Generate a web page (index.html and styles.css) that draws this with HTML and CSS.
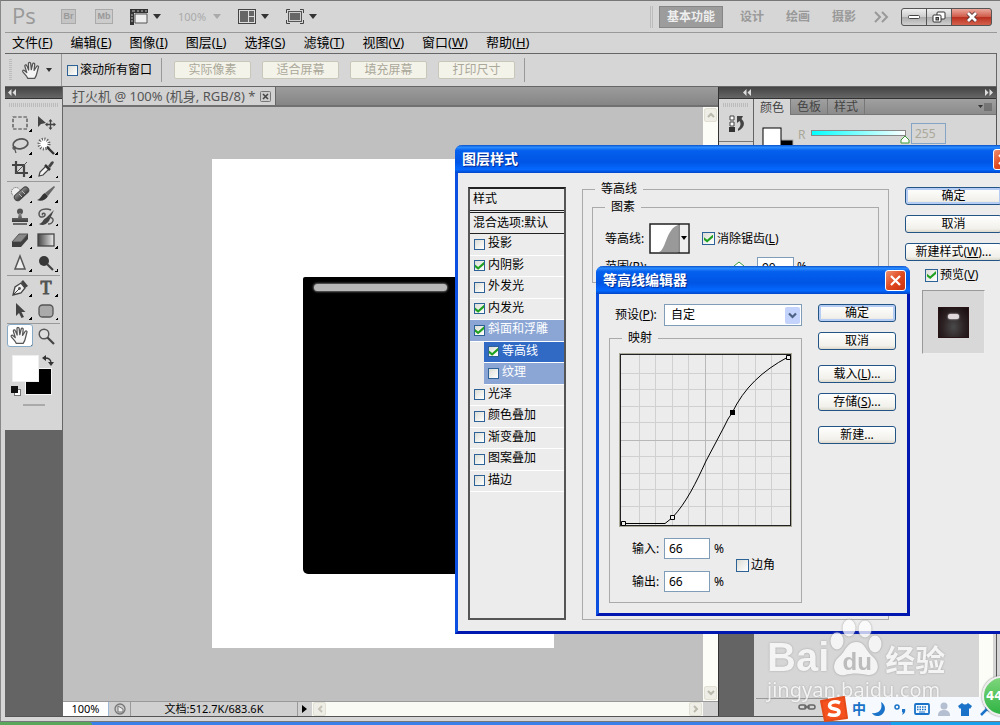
FILE: index.html
```html
<!DOCTYPE html>
<html lang="zh-CN">
<head>
<meta charset="utf-8">
<title>Photoshop</title>
<link rel="stylesheet" href="styles.css">
</head>
<body>
<svg class="defs" width="0" height="0" aria-hidden="true">
  <defs>
    <linearGradient id="steel" x1="0" y1="0" x2="0" y2="1"><stop offset="0" stop-color="#8c8c8c"/><stop offset="1" stop-color="#3c3c3c"/></linearGradient>
    <linearGradient id="fade" x1="0" y1="0" x2="1" y2="0"><stop offset="0" stop-color="#444"/><stop offset="1" stop-color="#eee"/></linearGradient>
    <symbol id="hand" viewBox="0 0 18 18"><path d="M6 16.500C5 14 3 12.500 1.300 10.200C.6 9 2 8.200 3 9.200L5 11L3.200 5C2.900 3.600 4.600 3.200 5.100 4.500L6.800 8.500L6.600 2.500C6.600 1 8.500 1 8.700 2.500L9.300 8.200L10.600 2.800C11 1.400 12.700 1.800 12.500 3.200L11.900 8.800L14.300 5.200C15.100 4 16.600 4.900 16 6.200C14.800 9 15 13 12.500 16.500Z" fill="#f4f4f4" stroke="#555" stroke-width="1.200" stroke-linejoin="round"/></symbol>
  </defs>
</svg>
<div class="window">
  <header class="appbar">
    <span class="logo">Ps</span>
    <span class="appicon">Br</span>
    <span class="appicon folder">Mb</span>
    <button class="tool-menu ruler" aria-label="查看额外内容">
      <svg width="18" height="16"><path d="M0 0H18V4H4V16H0Z" fill="#333"/><path d="M5 5H17V14H5Z" fill="#eee" stroke="#555"/><path d="M2 2H5M7 2H9M11 2H13M15 2H17M1 6H3M1 9H3M1 12H3" stroke="#bbb"/></svg>
      <i class="caret"></i>
    </button>
    <button class="tool-menu zoomlevel">100%<i class="caret"></i></button>
    <button class="tool-menu arrange" aria-label="排列文档">
      <svg width="18" height="15"><rect x=".5" y=".5" width="17" height="14" fill="#ddd" stroke="#444"/><path d="M2 2H10V13H2ZM11 2H16V7H11ZM11 8H16V13H11Z" fill="#666"/></svg>
      <i class="caret"></i>
    </button>
    <button class="tool-menu" aria-label="屏幕模式">
      <svg width="18" height="15"><path d="M.5 4V.5H4M14 .5H17.500V4M17.500 11V14.500H14M4 14.500H.5V11" fill="none" stroke="#444"/><rect x="2.500" y="2.500" width="13" height="10" fill="#ccc" stroke="#555"/><rect x="4" y="4" width="10" height="7" fill="#666"/></svg>
      <i class="caret"></i>
    </button>
    <nav class="workspaces">
      <button class="workspace active">基本功能</button>
      <button class="workspace">设计</button>
      <button class="workspace">绘画</button>
      <button class="workspace">摄影</button>
      <button class="workspace more" aria-label="更多"><svg width="15" height="12"><path d="M1 1L6 6L1 11M8 1L13 6L8 11" fill="none" stroke="#999" stroke-width="2"/></svg></button>
    </nav>
    <div class="winbuttons">
      <button aria-label="最小化"><svg width="14" height="6"><rect x="1.500" y="1.500" width="11" height="3" rx="1" fill="#fff" stroke="#444"/></svg></button>
      <button aria-label="还原"><svg width="14" height="12"><rect x="5" y="1" width="8" height="7" rx="1" fill="#fff" stroke="#333"/><rect x="1" y="4" width="8" height="7" rx="1" fill="#fff" stroke="#333"/><rect x="4" y="6.500" width="2.500" height="2.500" fill="#888" stroke="#333"/></svg></button>
      <button class="close" aria-label="关闭"><svg width="14" height="12"><path d="M3 2L11 10M11 2L3 10" stroke="#553030" stroke-width="4.500"/><path d="M3 2L11 10M11 2L3 10" stroke="#fff" stroke-width="2.800"/></svg></button>
    </div>
  </header>

  <nav class="menubar">
    <button>文件(<u>F</u>)</button><button>编辑(<u>E</u>)</button><button>图像(<u>I</u>)</button><button>图层(<u>L</u>)</button><button>选择(<u>S</u>)</button><button>滤镜(<u>T</u>)</button><button>视图(<u>V</u>)</button><button>窗口(<u>W</u>)</button><button>帮助(<u>H</u>)</button>
  </nav>

  <div class="options">
    <span class="grip-v"></span>
    <button class="current-tool" aria-label="抓手工具"><svg width="20" height="19"><use href="#hand"/></svg><i class="caret small"></i></button>
    <div class="scroll-all"><label class="check"><input type="checkbox">滚动所有窗口</label></div>
    <div class="option-buttons">
      <button disabled>实际像素</button><button disabled>适合屏幕</button><button disabled>填充屏幕</button><button disabled>打印尺寸</button>
    </div>
  </div>

  <main class="main">
    <aside class="toolbar">
      <div class="dockhead"><svg width="8" height="7"><path d="M3.500 0V7L0 3.500ZM8 0V7L4.500 3.500Z" fill="#ddd"/></svg></div>
      <div class="tools">
        <span class="grip-h"></span>
        <div class="toolgroup">
          <button class="tool" aria-label="选框"><svg viewBox="0 0 20 20"><rect x="3" y="4" width="14" height="12" fill="none" stroke="#444" stroke-width="1.200" stroke-dasharray="3.500 1.700"/></svg></button>
          <button class="tool flat" aria-label="移动"><svg viewBox="0 0 20 20"><path d="M2 3V14L5 11L10 10Z" fill="#444"/><path d="M14.500 7V16M10 11.500H19" stroke="#444" stroke-width="1.300"/><path d="M14.500 6L12.500 8.500H16.500ZM14.500 17L12.500 14.500H16.500ZM9 11.500L11.500 9.500V13.500ZM20 11.500L17.500 9.500V13.500Z" fill="#444"/></svg></button>
          <button class="tool" aria-label="套索"><svg viewBox="0 0 20 20"><ellipse cx="10.500" cy="8" rx="7.500" ry="4.800" transform="rotate(-12 10 8)" fill="none" stroke="#555" stroke-width="1.700"/><path d="M4 11C2 11 3 14 5 13C7 12 5 10 4 11L6 17" fill="none" stroke="#555" stroke-width="1.200"/></svg></button>
          <button class="tool" aria-label="魔棒"><svg viewBox="0 0 20 20"><circle cx="8" cy="8" r="5" fill="#f8f8f8" stroke="#555" stroke-width="3" stroke-dasharray="1 1.600"/><circle cx="8" cy="8" r="3" fill="#fff"/><path d="M11 11L18 18" stroke="#333" stroke-width="2.400"/></svg></button>
          <button class="tool" aria-label="裁剪"><svg viewBox="0 0 20 20"><path d="M6 2V14H18M2 6H14V18" fill="none" stroke="#444" stroke-width="2.200"/><path d="M6 14L17 3" stroke="#555"/></svg></button>
          <button class="tool" aria-label="吸管"><svg viewBox="0 0 20 20"><path d="M3 17L4 13L10 7L13 10L7 16Z" fill="#f4f4f4" stroke="#444" stroke-width="1.200"/><path d="M9 6L14 11" stroke="#333" stroke-width="2.500"/><path d="M12 7L15 3C17 1 19 3 17 5L14 9Z" fill="#444"/></svg></button>
        </div>
        <div class="toolgroup">
          <button class="tool" aria-label="修复画笔"><svg viewBox="0 0 20 20"><circle cx="6" cy="8" r="4.500" fill="#eee" stroke="#555" stroke-dasharray="1 1"/><rect x="3" y="7" width="17" height="6.500" rx="3.200" transform="rotate(-42 11 10)" fill="url(#steel)" stroke="#444"/><path d="M9 10L12 13M12 7L15 10" stroke="#bbb"/></svg></button>
          <button class="tool" aria-label="画笔"><svg viewBox="0 0 20 20"><path d="M1 16C5 15 5 11 9 9L12 12C10 16 5 18 1 16Z" fill="#333"/><path d="M9 9L18 2L19 3L12 12Z" fill="#666"/></svg></button>
          <button class="tool" aria-label="图章"><svg viewBox="0 0 20 20"><circle cx="10" cy="4.500" r="3" fill="#555"/><path d="M9 6H11L12 11H18V15H2V11H8Z" fill="url(#steel)"/><path d="M3 17H17" stroke="#444" stroke-width="1.500"/></svg></button>
          <button class="tool" aria-label="历史画笔"><svg viewBox="0 0 20 20"><path d="M15 3C10 1 3 2 3 7C3 12 10 10 9 7C8 5 5 7 7 8" fill="none" stroke="#555" stroke-width="1.500"/><path d="M3 17C7 16 7 12 10 11L18 3L13 14C10 18 6 19 3 17Z" fill="#444"/><path d="M13 10C20 11 17 17 12 17" fill="none" stroke="#555" stroke-width="1.400"/></svg></button>
          <button class="tool" aria-label="橡皮擦"><svg viewBox="0 0 20 20"><path d="M2 12L9 4H18L11 12Z" fill="#888" stroke="#555"/><path d="M2 12H11V17H2ZM11 12L18 4V9L11 17Z" fill="#3f3f3f"/></svg></button>
          <button class="tool" aria-label="渐变"><svg viewBox="0 0 20 20"><rect x="2" y="4" width="16" height="12" fill="url(#fade)" stroke="#444" stroke-width="1.300"/></svg></button>
          <button class="tool" aria-label="锐化"><svg viewBox="0 0 20 20"><path d="M10 3L15 16H5Z" fill="#eee" stroke="#555" stroke-width="1.500"/></svg></button>
          <button class="tool" aria-label="减淡"><svg viewBox="0 0 20 20"><circle cx="8" cy="8" r="5" fill="#383838"/><path d="M11 11L17 17" stroke="#444" stroke-width="2.200"/></svg></button>
        </div>
        <div class="toolgroup">
          <button class="tool" aria-label="钢笔"><svg viewBox="0 0 20 20"><path d="M3 17L5 9L11 5L15 10L11 15Z" fill="#f2f2f2" stroke="#444" stroke-width="1.300"/><path d="M3 17L9 11" stroke="#444"/><circle cx="9.500" cy="10.500" r="1.400" fill="#555"/><path d="M11 4L13 2L18 8L15 10Z" fill="#444"/></svg></button>
          <button class="tool type" aria-label="文字">T</button>
          <button class="tool" aria-label="路径选择"><svg viewBox="0 0 20 20"><path d="M6 2V15L9 12L11.500 17L14 16L11.500 11H15.500Z" fill="#444"/></svg></button>
          <button class="tool" aria-label="圆角矩形"><svg viewBox="0 0 20 20"><rect x="3" y="4" width="14" height="12" rx="3.500" fill="#aaa" stroke="#555" stroke-width="1.300"/></svg></button>
        </div>
        <div class="toolgroup last">
          <button class="tool selected" aria-label="抓手"><svg viewBox="0 0 20 20"><use href="#hand" width="19" height="19"/></svg></button>
          <button class="tool flat" aria-label="缩放"><svg viewBox="0 0 20 20"><circle cx="8" cy="8" r="4.800" fill="#ddd" stroke="#555" stroke-width="1.400"/><path d="M11.500 11.500L18 18" stroke="#444" stroke-width="2.200"/></svg></button>
        </div>
        <svg class="swatches" width="44" height="46" aria-label="前景色和背景色">
          <rect x="14.500" y="14.500" width="26" height="26" fill="#000" stroke="#f4f4f4"/>
          <rect x="1.500" y="1.500" width="26" height="26" fill="#fff" stroke="#eee"/>
          <path d="M34 4C38 4 40 6 40 9" fill="none" stroke="#333" stroke-width="1.300"/><path d="M35 1V7L31 4ZM37 8H43L40 12Z" fill="#333"/>
          <rect x="3.500" y="35.500" width="6" height="6" fill="#fff" stroke="#777"/><rect x="0" y="32" width="7" height="7" fill="#111"/>
        </svg>
        <span class="toolbar-end"></span>
      </div>
    </aside>

    <section class="document">
      <div class="tabs">
        <div class="tab">打火机 @ 100% (机身, RGB/8) *<button class="tab-close" aria-label="关闭标签"><svg width="11" height="11"><rect x=".5" y=".5" width="10" height="10" rx="1" fill="#ccc" stroke="#777"/><path d="M3 3L8 8M8 3L3 8" stroke="#444" stroke-width="1.500"/></svg></button></div>
      </div>
      <div class="viewport">
        <div class="canvas"><div class="paper"><div class="body-shape"><div class="shine"></div></div></div></div>
        <div class="vscroll">
          <button aria-label="向上"><svg width="8" height="6"><path d="M1 5L4 2L7 5" fill="none" stroke="#bbb9ac" stroke-width="2"/></svg></button>
          <button aria-label="向下"><svg width="8" height="6"><path d="M1 1L4 4L7 1" fill="none" stroke="#bbb9ac" stroke-width="2"/></svg></button>
        </div>
      </div>
      <div class="status">
        <input class="zoom" type="text" value="100%" aria-label="缩放比例">
        <span class="status-icon"><svg width="12" height="12"><circle cx="6" cy="6" r="5" fill="#ccc" stroke="#777" stroke-width="1.300"/><path d="M4 9V3L9 6V9Z" fill="#eee" stroke="#777"/></svg></span>
        <span class="docsize">文档:512.7K/683.6K</span>
        <button class="docmenu" aria-label="状态选项"><svg width="6" height="8"><path d="M0 0L5 4L0 8Z"/></svg></button>
        <div class="hscroll">
          <button aria-label="向左"><svg width="6" height="8"><path d="M5 1L2 4L5 7" fill="none" stroke="#c6c4b8" stroke-width="2"/></svg></button>
          <button aria-label="向右"><svg width="6" height="8"><path d="M1 1L4 4L1 7" fill="none" stroke="#bbb9ac" stroke-width="2"/></svg></button>
        </div>
        <span class="corner"></span>
      </div>
    </section>

    <aside class="dock">
      <div class="dockhead split">
        <svg width="8" height="7"><path d="M3.500 0V7L0 3.500ZM8 0V7L4.500 3.500Z" fill="#ddd"/></svg>
        <svg width="8" height="7"><path d="M0 0V7L3.500 3.500ZM4.500 0V7L8 3.500Z" fill="#ddd"/></svg>
      </div>
      <div class="dockbody">
        <div class="iconcol">
          <div class="iconpanel"><span class="grip-h"></span>
            <svg width="16" height="18"><path d="M1 1H5V5H1ZM1 7H5V11H1Z" fill="#fff" stroke="#444"/><rect y="12" x="0" width="6" height="5" fill="#333"/><path d="M8 1H14L12.500 4C17 8 15 13 9 16V14C12 11 12 8 10.500 6L8 8Z" fill="#444"/></svg>
          </div>
          <div class="iconpanel"></div>
        </div>
        <div class="panels">
          <div class="paneltabs"><button class="on">颜色</button><button>色板</button><button>样式</button>
            <svg class="panelmenu" width="14" height="8"><path d="M0 2H5L2.500 5Z" fill="#333"/><path d="M6 1H14M6 3H14M6 5H14M6 7H14" stroke="#555"/></svg></div>
          <div class="colorpanel">
            <svg width="32" height="26"><rect x="17" y="13" width="14" height="13" fill="#000" stroke="#aaa"/><rect x="1" y="1" width="18" height="24" fill="#fff" stroke="#000"/></svg>
            <label for="red">R</label>
            <svg class="redtrack" width="100" height="20"><defs><linearGradient id="cyan"><stop stop-color="#00ffff"/><stop offset="1" stop-color="#fff"/></linearGradient></defs><rect x=".5" y="5.500" width="94" height="5" fill="url(#cyan)" stroke="#888"/><path d="M94 11L98 15V18H90V15Z" fill="#fff" stroke="#3a9a3a"/></svg>
            <input id="red" type="text" value="255" disabled>
          </div>
          <div class="layers"><div class="layerlist"><span class="layerscroll"></span></div>
            <div class="layerfoot"><svg width="18" height="8"><rect x="1" y="2" width="7" height="4" rx="2" fill="none" stroke="#666" stroke-width="1.500"/><rect x="10" y="2" width="7" height="4" rx="2" fill="none" stroke="#666" stroke-width="1.500"/><path d="M6 4H12" stroke="#666" stroke-width="1.500"/></svg></div></div>
        </div>
      </div>
    </aside>
  </main>
</div>
<footer class="taskbar"><span class="start"></span><span class="tasks"></span><span class="tray"></span></footer>

<section class="dialog style-dialog" aria-label="图层样式">
  <div class="titlebar"><h2>图层样式</h2><button class="xclose" aria-label="关闭"><svg width="19" height="19"><path d="M5 5L14 14M14 5L5 14" stroke="#fff" stroke-width="2.200"/></svg></button></div>
  <div class="style-body">
    <div class="stylelist">
      <div class="sl-head">样式</div>
      <div class="sl-blend">混合选项:默认</div>
      <div class="sl-rows">
        <label class="check"><input type="checkbox">投影</label>
        <label class="check"><input type="checkbox" checked>内阴影</label>
        <label class="check"><input type="checkbox">外发光</label>
        <label class="check"><input type="checkbox" checked>内发光</label>
        <label class="check tinted"><input type="checkbox" checked>斜面和浮雕</label>
        <label class="check sub current"><input type="checkbox" checked>等高线</label>
        <label class="check sub tinted"><input type="checkbox">纹理</label>
        <label class="check"><input type="checkbox">光泽</label>
        <label class="check"><input type="checkbox">颜色叠加</label>
        <label class="check"><input type="checkbox">渐变叠加</label>
        <label class="check"><input type="checkbox">图案叠加</label>
        <label class="check"><input type="checkbox">描边</label>
      </div>
    </div>
    <fieldset class="contour">
      <legend>等高线</legend>
      <fieldset class="elements">
        <legend>图素</legend>
        <div class="row">
          <span>等高线:</span>
          <button class="contour-pick" aria-label="等高线"><svg width="41" height="31"><rect x="1" y="1" width="39" height="29" fill="#fff" stroke="#222" stroke-width="1.500"/><path d="M10 29C17 27 17 6 29 2V29Z" fill="#999"/><rect x="30" y="2" width="9" height="27" fill="#eee"/><path d="M30 1V30" stroke="#222"/><path d="M32 13H38L35 17Z"/></svg></button>
          <label class="check antialias"><input type="checkbox" checked><span>消除锯齿(<u>L</u>)</span></label>
        </div>
        <div class="row range">
          <label for="range">范围(<u>R</u>):</label>
          <svg width="98" height="14"><path d="M2 6.500H92" stroke="#999"/><path d="M84 2L89 6V13H79V6Z" fill="#fff" stroke="#3a9a3a"/></svg>
          <input id="range" type="text" value="90"><span>%</span>
        </div>
      </fieldset>
    </fieldset>
    <div class="style-actions">
      <button class="xp primary">确定</button>
      <button class="xp">取消</button>
      <button class="xp">新建样式(<u>W</u>)...</button>
      <label class="check"><input type="checkbox" checked><span>预览(<u>V</u>)</span></label>
      <div class="preview"><div class="preview-chip"></div></div>
    </div>
  </div>
</section>

<section class="dialog editor-dialog" aria-label="等高线编辑器">
  <div class="titlebar"><h2>等高线编辑器</h2><button class="xclose" aria-label="关闭"><svg width="19" height="19"><path d="M5 5L14 14M14 5L5 14" stroke="#fff" stroke-width="2.200"/></svg></button></div>
  <div class="editor-body">
    <div class="editor-left">
      <div class="preset">
        <label for="preset">预设(<u>P</u>):</label>
        <div class="combo"><select id="preset"><option>自定</option></select><svg width="15" height="17" viewBox="0 0 15 17"><rect width="15" height="17" rx="2" fill="#c3d3fb"/><path d="M4 6.500L7.500 10L11 6.500" fill="none" stroke="#4d6185" stroke-width="2.200"/></svg></div>
      </div>
      <fieldset class="mapping">
        <legend>映射</legend>
        <svg class="graph" width="173" height="174" aria-label="等高线曲线">
          <rect x=".5" y=".5" width="172" height="173" fill="#ececec" stroke="#aaa99a"/>
          <path d="M20.500 2V172M36.500 2V172M53.500 2V172M69.500 2V172M103.500 2V172M119.500 2V172M136.500 2V172M152.500 2V172M2 20.500H171M2 36.500H171M2 53.500H171M2 69.500H171M2 103.500H171M2 120.500H171M2 136.500H171M2 153.500H171" stroke="#d0d0d0"/>
          <path d="M86.500 2V172M2 87.500H171" stroke="#b8b8b8"/>
          <rect x="1.500" y="1.500" width="170" height="171" fill="none" stroke="#222"/>
          <path d="M4 170.500H46L53.500 164.500C67 150 77 130 87 108L105 74Q109 65 113 60C125 35 143 18 169 4" fill="none" stroke="#000"/>
          <path d="M2.500 168.500H6.500V172.500H2.500ZM51.500 162.500H55.500V166.500H51.500ZM167.500 2.500H171.500V6.500H167.500Z" fill="#eee" stroke="#000"/>
          <rect x="111" y="57" width="5" height="5"/>
        </svg>
        <div class="io">
          <div class="io-fields">
            <div class="io-row"><label for="in">输入:</label><input id="in" type="text" value="66"><span>%</span></div>
            <div class="io-row"><label for="out">输出:</label><input id="out" type="text" value="66"><span>%</span></div>
          </div>
          <label class="check"><input type="checkbox">边角</label>
        </div>
      </fieldset>
    </div>
    <div class="editor-actions">
      <div class="stack"><button class="xp primary">确定</button><button class="xp">取消</button></div>
      <div class="stack"><button class="xp">载入(<u>L</u>)...</button><button class="xp">存储(<u>S</u>)...</button></div>
      <div class="stack"><button class="xp">新建...</button></div>
    </div>
  </div>
</section>

<div class="watermark">
  <div class="wm-row"><span class="wm-bai">Bai</span>
    <span class="wm-paw"><svg width="56" height="58" viewBox="0 0 56 58"><ellipse cx="8" cy="22" rx="6.500" ry="8.500"/><ellipse cx="20" cy="9" rx="6.500" ry="8.500"/><ellipse cx="36" cy="10" rx="6.500" ry="8.500"/><ellipse cx="46" cy="25" rx="6.500" ry="8.500"/><path d="M27 23C36 23 36 31 43 37C53 45 49 57 39 56C31 54 23 54 16 56C5 58 1 46 10 38C17 32 18 23 27 23Z"/></svg><b>du</b></span>
    <span class="wm-jy">经验</span></div>
  <div class="wm-url">jingyan.baidu.com</div>
</div>

<div class="ime">
  <svg width="28" height="26" viewBox="0 0 28 26"><path d="M1 5L24 1L27 22L5 25Z" fill="#f4511e" stroke="#e64a19" stroke-linejoin="round" stroke-width="2"/><path d="M20 7C14 4 8 7 10 11C12 14 19 12 19 16C19 20 12 20 8 18" fill="none" stroke="#fff" stroke-width="3.500"/></svg>
  <span>中</span>
  <svg width="14" height="14"><path d="M9 0C16 4 13 14 5 14C3 14 1 13 0 11C7 12 11 7 9 0Z" fill="#1a73c8"/></svg>
  <svg width="12" height="12"><circle cx="3" cy="4" r="2" fill="none" stroke="#1a73c8" stroke-width="1.500"/><path d="M8 6H11C12 9 10 11 8 12C9 10 9 9 8 9Z" fill="#1a73c8"/></svg>
  <svg width="16" height="12"><rect x="1" y="1" width="14" height="10" rx="1" fill="none" stroke="#1a73c8" stroke-width="1.800"/><path d="M3 4H13M3 6.500H13" stroke="#1a73c8" stroke-width="1.500" stroke-dasharray="1.500 1"/><path d="M5 9H11" stroke="#1a73c8"/></svg>
  <svg width="12" height="14"><circle cx="6" cy="4" r="3.500" fill="#b4bfd2"/><path d="M0 14C-1 6 13 6 12 14Z" fill="#b4bfd2"/></svg>
  <svg width="14" height="14"><path d="M4 1C6 3 8 3 10 1L14 4L12 7L11 6V14H3V6L2 7L0 4Z" fill="#1a73c8"/></svg>
  <svg width="12" height="14"><path d="M1 13L8 6M7 3A3 3 0 1 0 12 7" stroke="#1a73c8" stroke-width="2.500" fill="none"/></svg>
</div>
<div class="ball">44</div>
</body>
</html>
```

FILE: styles.css
```css
* { box-sizing: border-box; }
html, body { height: 100%; }
body {
  margin: 0;
  position: relative;
  display: flex;
  flex-direction: column;
  overflow: hidden;
  background: #d6d6d6;
  color: #000;
  font: 12px/16px "Noto Sans", "Noto Sans CJK SC", sans-serif;
}
button, input, select { font: inherit; color: inherit; }
button { margin: 0; padding: 0; border: 0; background: none; }
svg { display: block; flex: none; }
.defs { position: absolute; }

.window {
  flex: 1;
  min-height: 0;
  display: flex;
  flex-direction: column;
  padding: 0 3px 4px 4px;
  border-top: 1px solid #777;
  border-left: 1px solid #888;
  background: #d6d6d6;
}

/* Application bar */
.appbar {
  display: flex;
  align-items: center;
  height: 32px;
  flex: none;
  padding: 0 5px 0 7px;
  border-bottom: 1px solid #999;
}
.logo { width: 49px; padding-bottom: 4px; font: 22px/24px "Open Sans", sans-serif; color: #999; }
.appicon {
  width: 15px;
  height: 15px;
  margin-right: 19px;
  border: 1px solid #aaa;
  background: #c4c4c4;
  color: #999;
  font: bold 9px/13px "Liberation Sans", sans-serif;
  text-align: center;
}
.appicon.folder { width: 18px; margin-right: 17px; background: #ccc; }
.tool-menu { display: flex; align-items: center; gap: 5px; margin-right: 17px; }
.tool-menu.zoomlevel { gap: 7px; color: #aaa; font-size: 11px; }
.caret { border: 4px solid transparent; border-top: 5px solid #333; border-bottom: 0; }
.zoomlevel .caret { border-top-color: #aaa; }
.caret.small { border-width: 4px 3px 0; }
.workspaces {
  display: flex;
  align-items: center;
  gap: 22px;
  margin-left: auto;
  padding-left: 6px;
  border-left: 3px double #bbb;
}
.workspace { color: #999; font-weight: bold; height: 22px; font-size: 12px; }
.workspace.active { width: 64px; margin-right: -5px; border: 1px solid #858585; background: #9c9c9c; color: #eee; }
.workspace.more { margin-left: -4px; }
.winbuttons { display: flex; margin-left: 12px; border: 1px solid #555; border-radius: 3px; background: #555; gap: 1px; overflow: hidden; }
.winbuttons button {
  display: grid;
  place-items: center;
  width: 24px;
  height: 16px;
  background: linear-gradient(#eee, #ccc 50%, #aaa 50%, #d0d0d0);
}
.winbuttons .close { width: 39px; background: linear-gradient(#eba89c, #cf5a48 50%, #b92e1e 50%, #d4604c); }

.menubar { display: flex; gap: 18px; height: 21px; flex: none; padding-left: 7px; border-bottom: 1px solid #666; }
.menubar button { font-size: 13px; line-height: 16px; padding-bottom: 2px; }
u { text-underline-offset: 1px; }

/* Options bar */
.options {
  display: flex;
  align-items: center;
  height: 32px;
  flex: none;
  padding-left: 4px;
  border-right: 1px solid #666;
}
.grip-v { width: 3px; height: 22px; background: repeating-linear-gradient(#bbb 0 1px, #d6d6d6 1px 2px); }
.current-tool { display: flex; align-items: center; gap: 5px; width: 50px; padding-left: 9px; height: 32px; border-right: 1px solid #999; }
.check { display: flex; align-items: center; gap: 2px; white-space: nowrap; }
.check input {
  appearance: none;
  flex: none;
  display: grid;
  place-items: center;
  width: 13px;
  height: 13px;
  margin: 0;
  border: 1px solid #2c6295;
  background: linear-gradient(135deg, #ddddd6, #fff);
}
.check input:checked::before {
  content: "";
  width: 9px;
  height: 8px;
  background: #21a121;
  clip-path: polygon(0 35%, 35% 65%, 100% 0, 100% 38%, 35% 100%, 0 70%);
}
.scroll-all { width: 100px; padding-left: 5px; height: 24px; display: flex; align-items: center; border-right: 1px solid #999; }
.scroll-all input { width: 11px; height: 11px; }
.option-buttons { display: flex; align-items: center; gap: 11px; height: 24px; padding: 0 9px 0 12px; border-right: 1px solid #999; }
.option-buttons button { width: 77px; height: 18px; border: 1px solid #c9c7ba; border-radius: 2px; background: #f4f3ea; color: #aaa899; line-height: 16px; }

.main { display: flex; flex: 1; min-height: 0; border-top: 1px solid #666; border-right: 1px solid #555; border-bottom: 1px solid #555; background: #646464; }
.dockhead { display: flex; align-items: center; height: 12px; padding-left: 3px; background: linear-gradient(#444, #666); border-bottom: 1px solid #333; flex: none; }
.dockhead.split { justify-content: space-between; padding: 0 3px 0 24px; }
.grip-h { display: block; height: 4px; background: repeating-linear-gradient(90deg, #bbb 0 1px, #d6d6d6 1px 2px); }

/* Tools */
.toolbar { width: 58px; flex: none; border-right: 1px solid #666; }
.tools { background: #d6d6d6; padding: 4px 2px 24px; }
.tools > .grip-h { margin: 0 2px 4px; }
.toolgroup { display: grid; grid-template-columns: 26px 26px; grid-auto-rows: 23px; border-bottom: 1px solid #999; padding-bottom: 1px; }
.toolgroup.last { border: 0; }
.tool { display: grid; place-items: center; border-radius: 3px; background: linear-gradient(135deg, transparent 50%, #000 50%) 22px 18px / 3px 3px no-repeat; }
.tool.flat { background: none; }
.tool svg { width: 20px; height: 20px; }
.tool.selected { border: 1px solid #86aac6; background-color: #fff; }
.tool.type { font: 18px/22px "Liberation Serif", serif; color: #444; -webkit-text-stroke: 1px #555; }
.swatches { margin: 6px 0 0 4px; }
.toolbar-end { display: block; width: 22px; height: 2px; margin: 4px auto 0; background: #aaa; }

/* Document */
.document { display: flex; flex-direction: column; flex: 1; min-width: 0; }
.tabs { display: flex; height: 20px; flex: none; background: linear-gradient(#9c9c9c, #858585); border-bottom: 2px solid #707070; }
.tab { display: flex; align-items: center; gap: 5px; padding: 0 4px 0 9px; background: #d2d2d2; color: #555; font-size: 13px; line-height: 18px; border-right: 1px solid #666; white-space: nowrap; }
.viewport { display: flex; flex: 1; min-height: 0; }
.canvas { flex: 1; min-width: 0; overflow: hidden; padding: 52px 0 0 149px; background: #c0c0c0; }
.paper { width: 342px; height: 489px; padding: 118px 91px; background: #fff; }
.body-shape { height: 297px; padding: 7px 11px; border-radius: 2px 2px 5px 5px; background: #000; }
.shine { width: 133px; height: 7px; border-radius: 4px; background: #b8b8b8; box-shadow: 0 0 2px 1px #666; }
.vscroll { width: 15px; display: flex; flex-direction: column; justify-content: space-between; background: #fdfdf8; padding: 1px; }
.vscroll button, .hscroll button { display: grid; place-items: center; width: 13px; height: 14px; border: 1px solid #e2e0d4; border-radius: 2px; background: #efeee6; }
.status { display: flex; height: 15px; flex: none; background: #d0d0d0; border-top: 1px solid #999; line-height: 14px; }
.status input { width: 46px; padding: 0; border: 1px solid #9db9d6; border-width: 0 1px 0 0; background: #fff; text-align: center; font-size: 11px; }
.status-icon { display: grid; place-items: center; width: 22px; border-right: 1px solid #999; }
.docsize { width: 167px; text-align: center; font-size: 11px; border-right: 1px solid #999; }
.docmenu { display: grid; place-items: center; width: 14px; }
.hscroll { display: flex; justify-content: space-between; flex: 1; padding: 0 1px; background: #fafaf5; }
.corner { width: 15px; }

/* Right dock */
.dock { display: flex; flex-direction: column; width: 278px; flex: none; border-left: 1px solid #333; }
.dockbody { display: flex; flex: 1; min-height: 0; }
.iconcol { width: 35px; flex: none; }
.iconpanel { width: 34px; height: 43px; padding: 4px 4px 0; background: #d6d6d6; border-bottom: 1px solid #777; }
.iconpanel svg { margin: 8px 0 0 6px; }
.panels { display: flex; flex-direction: column; flex: 1; min-width: 0; background: #d6d6d6; }
.paneltabs { display: flex; height: 16px; flex: none; background: linear-gradient(#a0a0a0, #8b8b8b); border-bottom: 1px solid #777; }
.paneltabs button { width: 37px; border-right: 1px solid #777; color: #444; line-height: 15px; }
.paneltabs .on { height: 16px; background: #d6d6d6; }
.panelmenu { margin: 4px 4px 0 auto; }
.colorpanel { display: flex; align-items: flex-start; padding: 8px 0 0 8px; height: 60px; color: #aaa899; }
.colorpanel > svg:first-child { margin-top: 4px; }
.colorpanel label { width: 17px; padding: 4px 0 0 4px; }
.redtrack { margin: 2px 0 0; }
.colorpanel input { width: 35px; height: 21px; padding: 0 3px; border: 1px solid #86a5c6; background: #d6d6d6; }
.layers { display: flex; flex-direction: column; flex: 1; min-height: 0; }
.layerlist { flex: 1; display: flex; justify-content: flex-end; margin: 0 3px 0 2px; border-bottom: 1px solid #999; }
.layerscroll { width: 14px; background: #fdfdf8; }
.layerfoot { height: 17px; padding: 4px 0 0 44px; }

.taskbar { display: flex; height: 4px; flex: none; background: #3a80e8; border-top: 1px solid #777; }
.start { width: 92px; background: #5aa65a; border-radius: 0 3px 0 0; }
.tasks { flex: 1; }
.tray { width: 109px; background: #16a0ee; }

/* Dialogs */
.dialog {
  position: absolute;
  display: flex;
  flex-direction: column;
  border: solid #0831d9;
  border-width: 0 3px 3px;
  border-color: #0a4fe0 #0018b0 #0018b0 #0a4fe0;
  border-radius: 7px 7px 0 0;
  background: #ececec;
}
.titlebar {
  display: flex;
  align-items: center;
  justify-content: space-between;
  height: 28px;
  margin: 0 -3px;
  padding: 0 4px 0 7px;
  border-radius: 7px 7px 0 0;
  background: linear-gradient(#0a50c8, #2b8cff 8%, #0560ee 20%, #0055e5 60%, #0568ff 88%, #0046c8);
  flex: none;
}
.titlebar h2 { margin: 0; color: #fff; font-size: 14px; line-height: 20px; text-shadow: 1px 1px 1px #002a90; }
.xclose { width: 21px; height: 21px; border: 1px solid #fff; border-radius: 3px; background: linear-gradient(135deg, #f09070, #e04a20 50%, #c83010); }
fieldset { min-width: 0; margin: 0; padding: 0; border: 1px solid #aaa; }
legend { padding: 0 6px; line-height: 16px; }
.xp {
  width: 78px;
  height: 18px;
  border: 1px solid #235486;
  border-radius: 3px;
  background: linear-gradient(#fff, #f1f0ea 80%, #dcd8cc);
  line-height: 16px;
  white-space: nowrap;
}
.xp.primary { box-shadow: inset 0 0 0 2px #b5cdf5; }
.dialog input[type="text"] { border: 1px solid #7f9db9; background: #fff; padding: 0 4px; height: 21px; }

.style-dialog { left: 455px; top: 145px; width: 563px; }
.style-body { display: flex; padding: 14px 0 11px 10px; }
.stylelist { width: 98px; height: 433px; flex: none; border: 2px solid #555; border-top-color: #222; }
.sl-head { height: 22px; padding: 2px 3px 0; border-bottom: 1px solid #222; }
.sl-blend { height: 22px; padding: 2px 3px 0; margin-top: 1px; border: solid #222; border-width: 1px 0 1px; white-space: nowrap; }
.sl-rows { display: grid; grid-template-rows: repeat(12, 1fr); height: 258px; }
.sl-rows .check { gap: 3px; padding: 0 0 2px 4px; border-bottom: 1px solid #fff; }
.sl-rows input { width: 11px; height: 11px; margin-top: 2px; }
.sl-rows .tinted { background: #8ba6d4; color: #fff; }
.sl-rows .sub { margin-left: 14px; }
.sl-rows .current { background: #316ac5; color: #fff; }
.contour { width: 307px; margin: -6px 0 0 16px; padding: 0 9px; border-color: #aaa; }
.contour > legend { margin-left: 3px; }
.elements { margin-top: 2px; height: 84px; padding: 8px 0 0 12px; }
.elements legend { margin-left: 0; }
.row { display: flex; align-items: center; height: 31px; }
.row > :first-child { width: 44px; white-space: nowrap; }
.antialias { margin-left: 12px; }
.range { height: 22px; margin-top: 2px; }
.range svg { margin-left: 6px; }
.range input { width: 37px; margin: 0 3px 0 4px; }
.style-actions { display: flex; flex-direction: column; gap: 10px; margin-left: 16px; }
.style-actions .xp { width: 97px; }
.style-actions .check { margin: -4px 0 -3px 20px; }
.preview { display: grid; place-items: center; width: 63px; height: 64px; margin-left: 17px; border: 1px solid #999; border-color: #999 #eee #eee #999; background: #d8d8d8; }
.preview-chip { width: 31px; height: 31px; padding: 6px 9px; background: radial-gradient(ellipse at 50% 65%, #4a4a4a 0, #2b2022 55%, #180c0e); border: 1px solid #281414; }
.preview-chip::before { content: ""; display: block; height: 5px; border-radius: 3px; background: #e0d8da; box-shadow: 0 0 2px #fff; }

.editor-dialog { left: 596px; top: 266px; width: 314px; }
.editor-body { display: flex; justify-content: space-between; padding: 10px 11px 10px 10px; }
.editor-left { width: 193px; }
.preset { display: flex; align-items: center; padding-left: 6px; }
.preset label { width: 49px; }
.combo { display: grid; align-items: center; width: 138px; }
.combo select { grid-area: 1 / 1; width: 138px; height: 22px; appearance: none; border: 1px solid #7f9db9; background: #fff; padding: 0 6px; border-radius: 0; }
.combo svg { grid-area: 1 / 1; justify-self: end; margin-right: 2px; pointer-events: none; }
.mapping { margin-top: 4px; padding: 0 9px 10px; }
.mapping legend { margin-left: 3px; }
.graph { margin-top: 7px; }
.io { display: flex; align-items: center; gap: 12px; margin: 11px 0 0 13px; white-space: nowrap; }
.io-fields { display: grid; gap: 12px; }
.io-row { display: flex; align-items: center; }
.io-row label { width: 32px; }
.io-row input { width: 46px; margin-right: 4px; }
.editor-actions { display: flex; flex-direction: column; gap: 15px; }
.stack { display: grid; gap: 10px; }

/* Overlays */
.watermark { position: absolute; left: 767px; top: 619px; color: #fff; opacity: .75; text-shadow: 0 0 2px #888; }
.wm-row { display: flex; align-items: flex-end; height: 58px; }
.wm-bai { font: bold 40px/40px "Liberation Sans", sans-serif; }
.wm-paw { display: grid; place-items: end center; }
.wm-paw svg { grid-area: 1 / 1; fill: #fff; filter: drop-shadow(0 0 1px #888); }
.wm-paw b { grid-area: 1 / 1; z-index: 1; color: #b4b4b4; font: bold 24px/30px "Liberation Sans", sans-serif; text-shadow: none; }
.wm-jy { font: bold 30px/38px "Noto Sans CJK SC", sans-serif; }
.wm-url { font-size: 20px; line-height: 26px; }
.ime {
  position: absolute;
  left: 820px;
  right: 0;
  bottom: 4px;
  height: 24px;
  display: flex;
  align-items: center;
  gap: 8px;
  background: linear-gradient(90deg, transparent 8px, #f6f9fd 8px);
}
.ime span { color: #1a73c8; font-weight: bold; font-size: 14px; margin: 0 -2px 0 -4px; }
.ball {
  position: absolute;
  left: calc(100% - 18px);
  top: 676px;
  width: 40px;
  height: 40px;
  padding-left: 2px;
  border: 2px solid #eee;
  border-radius: 50%;
  background: linear-gradient(#7ed67a, #2fb344);
  box-shadow: 0 0 2px #555;
  color: #fff;
  font: bold 12px/36px "DejaVu Sans", sans-serif;
}
```
